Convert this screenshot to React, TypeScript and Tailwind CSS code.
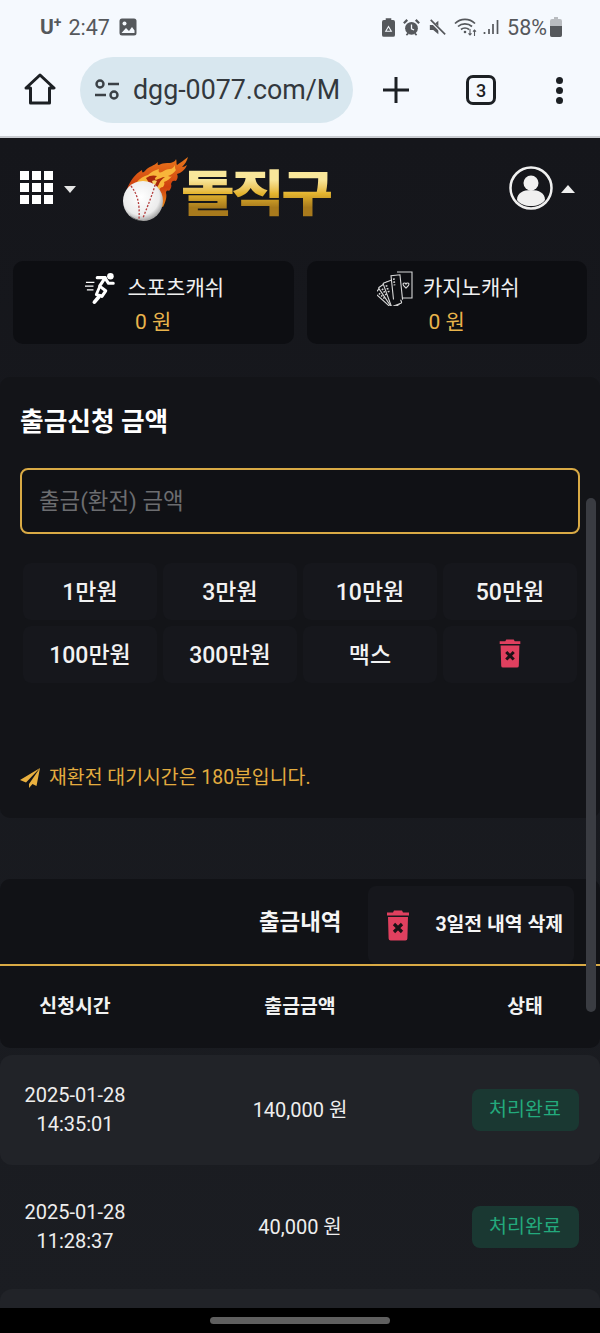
import React from "react";

const FONT = "font-['Roboto','Noto_Sans_CJK_KR',sans-serif]";

function Trash({ className = "" }: { className?: string }) {
  return (
    <svg viewBox="0 0 24 32" className={className}>
      <path d="M8 1.500h8l1 2h6v3H1v-3h6z" fill="#e0405f" />
      <path d="M2 8h20l-.6 21.500a2 2 0 0 1-2 2H4.600a2 2 0 0 1-2-2z" fill="#e0405f" />
      <path d="M8 15l8 8M16 15l-8 8" stroke="#1b1216" strokeWidth="3.200" />
    </svg>
  );
}

function StatusBar() {
  return (
    <div className="h-[54px] flex items-end justify-between pl-[40px] pr-[38px] pb-[16px] text-[#55585c]">
      <div className="flex items-center">
        <span className="text-[21px] font-bold leading-none text-[#55585c]">U</span>
        <span className="text-[14px] font-bold leading-none -mt-[10px]">+</span>
        <span className="text-[21.500px] leading-none ml-[7px]">2:47</span>
        <svg viewBox="0 0 18 18" className="w-[18px] h-[18px] ml-[9px]">
          <rect x="0.500" y="0.500" width="17" height="17" rx="2.500" fill="#55585c" />
          <circle cx="5.500" cy="5.500" r="2" fill="#f5f9fe" />
          <path d="M2.500 15l4.500-5 3 3 3-4 2.500 3.500v2.500z" fill="#f5f9fe" />
        </svg>
      </div>
      <div className="flex items-center">
        <svg viewBox="0 0 14 20" className="w-[13px] h-[19px]">
          <path d="M4 0h6v2h2a2 2 0 0 1 2 2v14a2 2 0 0 1-2 2H2a2 2 0 0 1-2-2V4a2 2 0 0 1 2-2h2z" fill="#55585c" />
          <path d="M4 14l3-5 3 5z" fill="none" stroke="#f5f9fe" strokeWidth="1.200" />
        </svg>
        <svg viewBox="0 0 20 20" className="w-[17px] h-[17px] ml-[8px]">
          <circle cx="10" cy="11" r="7.500" fill="#55585c" />
          <path d="M10 6.500v5l3 1.500" stroke="#f5f9fe" strokeWidth="1.500" fill="none" />
          <path d="M1 5l4-4M19 5l-4-4" stroke="#55585c" strokeWidth="2.600" />
          <path d="M4 19l2-2M16 19l-2-2" stroke="#55585c" strokeWidth="2" />
        </svg>
        <svg viewBox="0 0 20 20" className="w-[17px] h-[17px] ml-[9px]">
          <path d="M1 7h4l6-5v16l-6-5H1z" fill="#55585c" />
          <path d="M2 2l16 16" stroke="#f5f9fe" strokeWidth="3.500" />
          <path d="M2 1l17 17" stroke="#55585c" strokeWidth="2" />
        </svg>
        <svg viewBox="0 0 24 20" className="w-[24px] h-[20px] ml-[8px]">
          <path d="M1 6.500c5.500-5.500 14.500-5.500 20 0" stroke="#55585c" strokeWidth="1.700" fill="none" />
          <path d="M4 9.500c3.800-3.600 10-3.600 14 0" stroke="#55585c" strokeWidth="1.700" fill="none" />
          <path d="M7 12.500c2.200-2 5.800-2 8 0" stroke="#55585c" strokeWidth="1.700" fill="none" />
          <circle cx="11" cy="15" r="1.300" fill="#55585c" />
          <path d="M16 12v6M14.500 16.300l1.500 1.700 1.500-1.700M20.500 19v-6M19 14.700l1.500-1.700 1.500 1.700" stroke="#55585c" strokeWidth="1.100" fill="none" />
        </svg>
        <svg viewBox="0 0 16 16" className="w-[16px] h-[16px] ml-[5px]">
          <path d="M1.500 13v2M6 10v5M10 5v10M14.500 1v14" stroke="#55585c" strokeWidth="1.700" />
        </svg>
        <span className="text-[21.500px] leading-none ml-[8px]">58%</span>
        <svg viewBox="0 0 12 20" className="w-[12px] h-[20px] ml-[3px]">
          <path d="M4 0h4v2h2a2 2 0 0 1 2 2v14a2 2 0 0 1-2 2H2a2 2 0 0 1-2-2V4a2 2 0 0 1 2-2h2z" fill="#b9bcc0" />
          <path d="M0 9h12v9a2 2 0 0 1-2 2H2a2 2 0 0 1-2-2z" fill="#55585c" />
        </svg>
      </div>
    </div>
  );
}

function BrowserBar() {
  return (
    <div className="h-[84px] flex items-start pl-[24px] border-b-2 border-[#c9ccd1]">
      <svg viewBox="0 0 32 32" className="w-[32px] h-[32px] mt-[19px]" fill="none" stroke="#1c2024" strokeWidth="3" strokeLinejoin="round">
        <path d="M2 15L16 2l14 13h-4.500v15h-19V15z" />
      </svg>
      <div className="ml-[24px] mt-[3px] w-[273px] h-[66px] rounded-full bg-[#d8e7ef] flex items-center pl-[14px]">
        <svg viewBox="0 0 26 22" className="w-[26px] h-[22px] shrink-0" fill="none" stroke="#3b4146" strokeWidth="2.400">
          <circle cx="6" cy="5" r="3.500" />
          <path d="M14 5h11M1 16h11" />
          <circle cx="20" cy="16" r="3.500" />
        </svg>
        <div className="ml-[13px] whitespace-nowrap text-[26.800px] leading-none text-[#33383d]">dgg-0077.com/M</div>
      </div>
      <svg viewBox="0 0 28 28" className="w-[28px] h-[28px] ml-[29px] mt-[22px]" stroke="#1c2024" strokeWidth="3">
        <path d="M14 1v26M1 14h26" />
      </svg>
      <div className="ml-[56px] mt-[21px] w-[30px] h-[30px] rounded-[7px] border-[3px] border-[#1c2024] flex items-center justify-center text-[18px] font-medium text-[#1c2024]">3</div>
      <div className="ml-[60px] mt-[23px] flex flex-col gap-[3px]">
        <div className="w-[7px] h-[7px] rounded-full bg-[#1c2024]" />
        <div className="w-[7px] h-[7px] rounded-full bg-[#1c2024]" />
        <div className="w-[7px] h-[7px] rounded-full bg-[#1c2024]" />
      </div>
    </div>
  );
}

function Logo() {
  return (
    <div className="relative w-[210px] h-[66px]">
      <svg viewBox="0 0 210 66" className="absolute inset-0 w-full h-full">
        <defs>
          <linearGradient id="fl" x1="0" y1="0" x2="0" y2="1">
            <stop offset="0" stopColor="#e9781c" />
            <stop offset="0.600" stopColor="#cf3f0e" />
            <stop offset="1" stopColor="#e88a1a" />
          </linearGradient>
          <radialGradient id="ball" cx="0.450" cy="0.400" r="0.650">
            <stop offset="0" stopColor="#ffffff" />
            <stop offset="0.700" stopColor="#ececec" />
            <stop offset="1" stopColor="#8b8b8b" />
          </radialGradient>
        </defs>
        <path d="M5 32C8 24 13 17 20 13c0 3 1 3 3 1 4-5 9-5 13-9-1 3 0 4 3 2 2-1 5-1 9-1 3-1 5-1 6-4 1 2 0 5 1 6 3-2 7-5 11-8-1 4-3 7-6 10 2 0 3-1 5-2-2 5-6 8-10 9 1 2 1 4-1 7-3-1-4 0-5 3 1 2 0 5-2 7-2-1-3 0-3 2 1 3 0 8-3 14L8 36z" fill="url(#fl)" />
        <path d="M14 26c4-5 8-7 12-8 3-3 7-5 11-6-1 3 0 4 3 3 3-2 5-3 8-3 2 0 4-2 5-4 0 3 0 4 1 5-2 3-5 5-8 6 2 1 3 1 4 0-2 3-5 5-8 6 1 2 0 3-1 5-2 0-3 1-4 3-1 3-2 4-4 5z" fill="#f8b53a" />
        <path d="M24 21c4-3 8-3 11-2-2 2-3 3-1 4 3-1 6-3 9-3-3 2-5 4-6 7-1 2-3 5-5 7z" fill="#a9270a" />
        <path d="M30 24c2-1 3-1 5 0-1 2-2 4-3 6z" fill="#f8d26a" />
        <circle cx="21" cy="44" r="20" fill="url(#ball)" />
        <path d="M9 29c6 8 9 16 8 33M33 28c-2 8-7 20-12 33" stroke="#b33a3a" strokeWidth="1.300" fill="none" strokeDasharray="2 1.600" />
        <path d="M8 58c3 4 10 7 16 6-6 0-12-2-16-6z" fill="#222" />
      </svg>
      <div className="absolute left-[59px] top-[-2px] origin-left scale-x-[1.19] text-[49px] leading-[70px] font-black whitespace-nowrap tracking-[-3px] bg-linear-to-b from-[#f9e79a] via-[#e4b52f] to-[#a87a1c] from-35% via-55% to-75% bg-clip-text text-transparent font-['Noto_Sans_CJK_KR',sans-serif]">
        돌직구
      </div>
    </div>
  );
}

function RunnerIcon() {
  return (
    <svg viewBox="0 0 34 34" className="w-[32px] h-[34px] shrink-0" fill="none" stroke="white" strokeWidth="3.300" strokeLinejoin="round" strokeLinecap="round">
      <circle cx="27" cy="4.500" r="3.500" fill="white" stroke="none" />
      <path d="M13 6h8.500l-6 9 6.500 5-4 6" />
      <path d="M21 6l4 6h5" />
      <path d="M15 17l-3 7 5 1" strokeWidth="3" />
      <path d="M15 26l-5 6" strokeWidth="4" />
      <path d="M1 11h9M0 15h9M2 19h7" strokeWidth="1.200" strokeLinecap="butt" />
    </svg>
  );
}

function CardsIcon() {
  const cards = [-48, -34, -20];
  return (
    <svg viewBox="0 0 36 36" className="w-[36px] h-[36px] shrink-0" fill="#0d0e12" stroke="#d8d8d8" strokeWidth="1.100">
      <path d="M20 2h15v26H22" fill="none" />
      {cards.map((a) => (
        <g key={a} transform={`rotate(${a} 22 34)`}>
          <rect x="14" y="9" width="11" height="25" rx="1" />
          <path d="M16.500 12v9" stroke="#d8d8d8" strokeWidth="1.800" strokeDasharray="1.500 1.500" />
        </g>
      ))}
      <g transform="rotate(-6 22 34)">
        <rect x="17" y="5" width="9" height="25" fill="#0d0e12" stroke="none" />
        <path d="M26 30V5H17v24" fill="none" />
        <path d="M19.500 8v7" stroke="#d8d8d8" strokeWidth="1.800" strokeDasharray="1.500 1.500" />
      </g>
      <path d="M26 14a1.600 1.600 0 0 1 3 0 1.600 1.600 0 0 1 3 0c0 2-2 3-3 4-1-1-3-2-3-4z" fill="none" />
    </svg>
  );
}

function Money({ icon, label }: { icon: React.ReactNode; label: string }) {
  return (
    <div className="flex-1 h-[83px] bg-[#0d0e12] rounded-[10px] flex flex-col items-center pt-[8px]">
      <div className="flex items-center h-[38px] gap-[10px] pl-[3px] text-[21px] leading-none text-[#f0f0f0]">
        {icon}
        <span>{label}</span>
      </div>
      <div className="mt-[1px] text-[21px] leading-[28px] text-[#e9b44c]">0 원</div>
    </div>
  );
}

function Amt({ children }: { children: React.ReactNode }) {
  return (
    <div className="h-[57px] rounded-[8px] bg-[#16171c] flex items-center justify-center text-[#f2f2f2] text-[23px] font-medium pt-[3px]">
      {children}
    </div>
  );
}

function Row({ d, t, amt, bg }: { d: string; t: string; amt: string; bg: string }) {
  return (
    <div className={`${bg} shrink-0 rounded-[12px] flex items-center text-[#eeeeee]`}>
      <div className="w-[150px] text-center text-[20px] leading-[29px]">
        <div>{d}</div>
        <div>{t}</div>
      </div>
      <div className="w-[300px] text-center text-[20px]">{amt}</div>
      <div className="flex-1 flex justify-center">
        <div className="w-[107px] h-[42px] rounded-[8px] bg-[#1a3832] text-[#23a97c] text-[19.500px] flex items-center justify-center">처리완료</div>
      </div>
    </div>
  );
}

export default function App() {
  return (
    <div className={`${FONT} relative w-[600px] h-[1333px] overflow-hidden flex flex-col bg-[#f5f9fe]`}>
      <StatusBar />
      <BrowserBar />
      <main className="flex-1 min-h-0 overflow-hidden flex flex-col bg-linear-to-b from-[#15161b] to-[#1b1d22]">
        <header className="h-[123px] shrink-0 flex items-start pl-[20px] pr-[25px]">
          <div className="mt-[33px] grid grid-cols-3 gap-[3px] w-[33px] shrink-0">
            {Array.from({ length: 9 }).map((_, i) => (
              <div key={i} className="h-[9px] bg-white" />
            ))}
          </div>
          <div className="ml-[11px] mt-[48px] w-0 h-0 border-x-[6px] border-x-transparent border-t-[7px] border-t-[#e5e5e5]" />
          <div className="ml-[46px] mt-[19px] shrink-0"><Logo /></div>
          <svg viewBox="0 0 44 44" className="ml-[177px] mt-[28px] w-[44px] h-[44px] shrink-0">
            <circle cx="22" cy="22" r="20.500" fill="none" stroke="#f0f0f0" strokeWidth="2.500" />
            <circle cx="22" cy="17" r="7.500" fill="#f0f0f0" />
            <path d="M8 34c0-7 6-10 14-10s14 3 14 10c-3 4-8 6-14 6s-11-2-14-6z" fill="#f0f0f0" />
          </svg>
          <div className="ml-[8px] mt-[47px] w-0 h-0 border-x-[7px] border-x-transparent border-b-[8px] border-b-[#eeeeee]" />
        </header>

        <div className="shrink-0 flex gap-[13px] px-[13px]">
          <Money icon={<RunnerIcon />} label="스포츠캐쉬" />
          <Money icon={<CardsIcon />} label="카지노캐쉬" />
        </div>

        <section className="shrink-0 mt-[33px] h-[441px] rounded-[10px] bg-[#131418] px-[20px] pt-[26px]">
          <h2 className="text-[25.700px] leading-[38px] font-bold text-white">출금신청 금액</h2>
          <div className="mt-[27px] h-[66px] rounded-[8px] border-2 border-[#d9aa45] bg-[#101115] flex items-center pl-[17px] pt-[2px] text-[22.400px] text-[#6c6d70]">
            출금(환전) 금액
          </div>
          <div className="mt-[29px] mx-[3px] grid grid-cols-4 gap-[6px]">
            <Amt>1만원</Amt>
            <Amt>3만원</Amt>
            <Amt>10만원</Amt>
            <Amt>50만원</Amt>
            <Amt>100만원</Amt>
            <Amt>300만원</Amt>
            <Amt>맥스</Amt>
            <Amt><Trash className="w-[24px] h-[30px] -mt-[7px]" /></Amt>
          </div>
          <div className="mt-[85px] flex items-center gap-[9px] text-[19.400px] leading-none text-[#e3ac3f]">
            <svg viewBox="0 0 20 20" className="w-[20px] h-[20px] shrink-0" fill="#e9b03f">
              <path d="M20 0L0 12l6 2.500zM20 0L9 16v4l3.500-4 4 2z" />
            </svg>
            <span>재환전 대기시간은 180분입니다.</span>
          </div>
        </section>

        <section className="shrink-0 mt-[61px] h-[169px] rounded-[10px] bg-[#111216]">
          <div className="h-[87px] flex items-start border-b-2 border-[#d9aa45]">
            <div className="mt-[29px] ml-[259px] text-[22.400px] leading-[28px] font-bold text-[#f5f5f5]">출금내역</div>
            <div className="ml-[27px] mt-[7px] w-[206px] h-[78px] rounded-[8px] bg-[#16171c] flex items-center pl-[18px] gap-[25px]">
              <Trash className="w-[24px] h-[32px]" />
              <span className="text-[19.400px] font-bold text-[#f5f5f5] whitespace-nowrap">3일전 내역 삭제</span>
            </div>
          </div>
          <div className="h-[80px] flex items-start pt-[27px] text-[19.400px] leading-[28px] font-bold text-[#f2f2f2]">
            <div className="w-[150px] text-center">신청시간</div>
            <div className="w-[300px] text-center">출금금액</div>
            <div className="flex-1 text-center">상태</div>
          </div>
        </section>

        <div className="mt-[7px] flex-1 min-h-0 flex flex-col overflow-hidden">
          <Row d="2025-01-28" t="14:35:01" amt="140,000 원" bg="h-[110px] bg-[#212328]" />
          <Row d="2025-01-28" t="11:28:37" amt="40,000 원" bg="h-[124px] bg-transparent" />
          <div className="h-[40px] shrink-0 rounded-[12px] bg-[#212328]" />
        </div>
      </main>
      <div className="h-[25px] shrink-0 bg-black flex justify-center items-start pt-[9px]">
        <div className="w-[180px] h-[7px] rounded-full bg-[#5f5f5f]" />
      </div>
      <div className="absolute left-[586px] top-[498px] w-[10px] h-[514px] rounded-full bg-[#3a3c42]" />
    </div>
  );
}
